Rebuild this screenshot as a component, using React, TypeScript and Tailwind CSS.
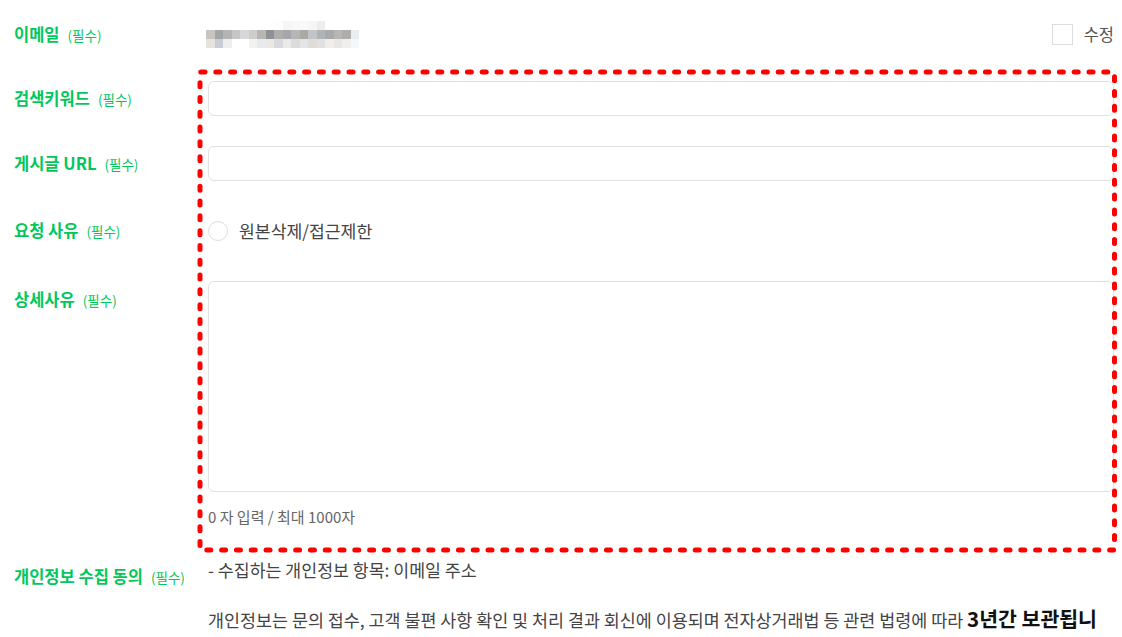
import React from "react";

const FONT = "font-['Noto_Sans_CJK_KR','Noto_Sans',sans-serif]";

// pixelated (mosaic) email value, 3 rows x 18 blocks
const MOSAIC: string[][] = [
  [
    "bg-[#ffffff]", "bg-[#ffffff]", "bg-[#ffffff]", "bg-[#ffffff]", "bg-[#ffffff]", "bg-[#ffffff]",
    "bg-[#ffffff]", "bg-[#ffffff]", "bg-[#fdfdfd]", "bg-[#f6f6f6]", "bg-[#f8f8f8]", "bg-[#f9f9f9]",
    "bg-[#f5f5f5]", "bg-[#ededed]", "bg-[#ffffff]", "bg-[#ffffff]", "bg-[#ffffff]", "bg-[#ffffff]",
  ],
  [
    "bg-[#c8c4bf]", "bg-[#a3a5a8]", "bg-[#b5b4b4]", "bg-[#c6c6c6]", "bg-[#d8d8da]", "bg-[#cfcdca]",
    "bg-[#b8b5b2]", "bg-[#8f9195]", "bg-[#b0aeac]", "bg-[#a6a7ab]", "bg-[#b5b6b8]", "bg-[#aca8a4]",
    "bg-[#c3c4c6]", "bg-[#b1b4b7]", "bg-[#aaa9a9]", "bg-[#b8b5b3]", "bg-[#aeadad]", "bg-[#e9edf1]",
  ],
  [
    "bg-[#e6e2dd]", "bg-[#c8ccd4]", "bg-[#eeeeee]", "bg-[#ffffff]", "bg-[#ffffff]", "bg-[#f3f2f0]",
    "bg-[#e8eaee]", "bg-[#ebe9e6]", "bg-[#d9d8dc]", "bg-[#e9eaea]", "bg-[#dddcdb]", "bg-[#e4e5e7]",
    "bg-[#dfdcda]", "bg-[#e2e0e0]", "bg-[#f0eeed]", "bg-[#e9e7e6]", "bg-[#f0efee]", "bg-[#f5f7f8]",
  ],
];

function Label({ text }: { text: string }) {
  return (
    <span className="leading-[24px] whitespace-nowrap">
      <span className="text-[16.5px] font-bold text-[#03c75a]">{text}</span>
      <span className="ml-[8px] text-[13.5px] text-[#03c75a]">(필수)</span>
    </span>
  );
}

export default function App() {
  return (
    <div className={`relative w-[1122px] h-[637px] overflow-hidden bg-white ${FONT}`}>
      <div className="pt-[14px] pr-[8px]">
        {/* email */}
        <div className="flex items-center h-[40px]">
          <div className="w-[208px] shrink-0 pl-[14px]">
            <Label text="이메일" />
          </div>
          <div className="flex-1 flex items-center justify-between">
            <div className="ml-[-2px] w-[153px] grid grid-cols-18">
              {MOSAIC.flat().map((c, i) => (
                <div key={i} className={`h-[9px] ${c}`} />
              ))}
            </div>
            <label className="flex items-center gap-[11px] text-[16.5px] text-[#555]">
              <span className="w-[21px] h-[21px] border border-[#dddddd] bg-white" />
              <span className="leading-[24px]">수정</span>
            </label>
          </div>
        </div>

        {/* keyword */}
        <div className="flex items-center mt-[27px]">
          <div className="w-[208px] shrink-0 pl-[14px]">
            <Label text="검색키워드" />
          </div>
          <div className="flex-1 h-[35px] rounded-[6px] border border-[#e0e0e0]" />
        </div>

        {/* url */}
        <div className="flex items-center mt-[30px]">
          <div className="w-[208px] shrink-0 pl-[14px]">
            <Label text="게시글 URL" />
          </div>
          <div className="flex-1 h-[35px] rounded-[6px] border border-[#e0e0e0]" />
        </div>

        {/* reason */}
        <div className="flex items-center mt-[32px] h-[35px]">
          <div className="w-[208px] shrink-0 pl-[14px]">
            <Label text="요청 사유" />
          </div>
          <div className="flex-1 flex items-center">
            <span className="w-[20px] h-[20px] rounded-full border border-[#dddddd]" />
            <span className="ml-[11px] text-[17.2px] leading-[24px] text-[#444]">원본삭제/접근제한</span>
          </div>
        </div>

        {/* detail */}
        <div className="flex mt-[33px]">
          <div className="w-[208px] shrink-0 pl-[14px] pt-[6px]">
            <Label text="상세사유" />
          </div>
          <div className="flex-1">
            <div className="h-[211px] rounded-[6px] border border-[#e0e0e0]" />
            <div className="mt-[15px] text-[15px] leading-[20px] text-[#666]">0 자 입력 / 최대 1000자</div>
          </div>
        </div>

        {/* privacy */}
        <div className="flex mt-[31px]">
          <div className="w-[208px] shrink-0 pl-[14px] pt-[6px]">
            <Label text="개인정보 수집 동의" />
          </div>
          <div className="flex-1">
            <div className="text-[17.3px] leading-[24px] text-[#444]">- 수집하는 개인정보 항목: 이메일 주소</div>
            <p className="mt-[21px] text-[17.4px] leading-[30px] text-[#444]">
              개인정보는 문의 접수, 고객 불편 사항 확인 및 처리 결과 회신에 이용되며 전자상거래법 등 관련 법령에 따라{" "}
              <strong className="text-[20.5px] font-bold text-[#111]">3년간 보관됩니다</strong>
            </p>
          </div>
        </div>
      </div>

      {/* red dashed annotation box */}
      <svg
        className="absolute left-[197px] top-[69px] pointer-events-none"
        width="921"
        height="484"
        viewBox="0 0 921 484"
      >
        <rect
          x="3"
          y="3"
          width="914.5"
          height="478"
          rx="1"
          fill="none"
          stroke="#ff0000"
          strokeWidth="5"
          strokeLinecap="round"
          strokeDasharray="4 10.8"
        />
      </svg>
    </div>
  );
}
